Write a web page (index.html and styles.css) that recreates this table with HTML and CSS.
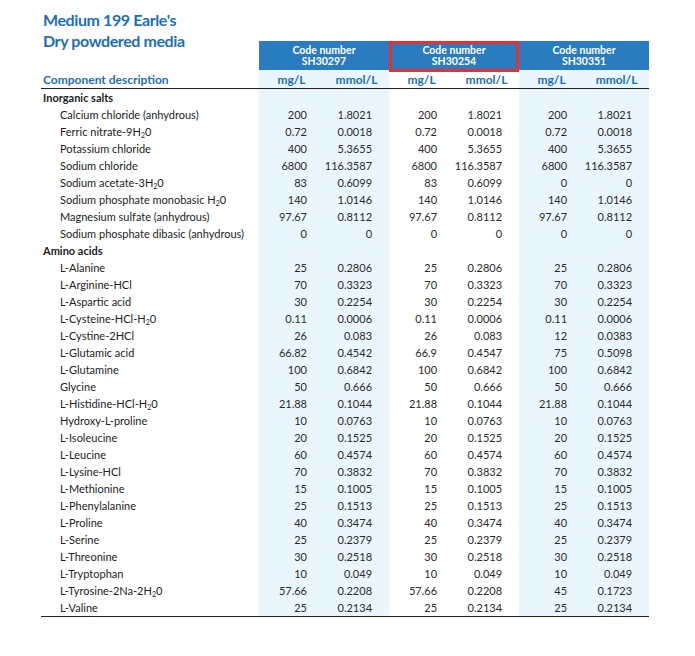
FILE: index.html
```html
<!DOCTYPE html>
<html>
<head>
<meta charset="utf-8">
<link rel="stylesheet" href="styles.css">
</head>
<body>
<div class="sheet">
<table class="media">
  <colgroup>
    <col class="c-desc"><col class="c-num"><col class="c-num"><col class="c-num"><col class="c-num"><col class="c-num"><col class="c-num">
  </colgroup>
  <thead>
    <tr class="r-code">
      <td class="title-cell"><h1 class="title">Medium 199 Earle's<br>Dry powdered media</h1></td>
      <th colspan="2" class="code-cell"><div class="codebox"><span>Code number</span><span>SH30297</span></div></th>
      <th colspan="2" class="code-cell"><div class="codebox sel"><span>Code number</span><span>SH30254</span></div></th>
      <th colspan="2" class="code-cell"><div class="codebox"><span>Code number</span><span>SH30351</span></div></th>
    </tr>
    <tr class="r-units">
      <th class="comp">Component description</th>
      <th class="unit tint">mg/L</th><th class="unit tint">mmol/L</th>
      <th class="unit">mg/L</th><th class="unit">mmol/L</th>
      <th class="unit tint">mg/L</th><th class="unit tint">mmol/L</th>
    </tr>
  </thead>
  <tbody>
    <tr class="grp"><td>Inorganic salts</td><td class="tint"></td><td class="tint"></td><td></td><td></td><td class="tint"></td><td class="tint"></td></tr>
    <tr><td class="item">Calcium chloride (anhydrous)</td><td class="n tint">200</td><td class="n tint">1.8021</td><td class="n">200</td><td class="n">1.8021</td><td class="n tint">200</td><td class="n tint">1.8021</td></tr>
    <tr><td class="item">Ferric nitrate-9H<sub>2</sub>0</td><td class="n tint">0.72</td><td class="n tint">0.0018</td><td class="n">0.72</td><td class="n">0.0018</td><td class="n tint">0.72</td><td class="n tint">0.0018</td></tr>
    <tr><td class="item">Potassium chloride</td><td class="n tint">400</td><td class="n tint">5.3655</td><td class="n">400</td><td class="n">5.3655</td><td class="n tint">400</td><td class="n tint">5.3655</td></tr>
    <tr><td class="item">Sodium chloride</td><td class="n tint">6800</td><td class="n tint">116.3587</td><td class="n">6800</td><td class="n">116.3587</td><td class="n tint">6800</td><td class="n tint">116.3587</td></tr>
    <tr><td class="item">Sodium acetate-3H<sub>2</sub>0</td><td class="n tint">83</td><td class="n tint">0.6099</td><td class="n">83</td><td class="n">0.6099</td><td class="n tint">0</td><td class="n tint">0</td></tr>
    <tr><td class="item">Sodium phosphate monobasic H<sub>2</sub>0</td><td class="n tint">140</td><td class="n tint">1.0146</td><td class="n">140</td><td class="n">1.0146</td><td class="n tint">140</td><td class="n tint">1.0146</td></tr>
    <tr><td class="item">Magnesium sulfate (anhydrous)</td><td class="n tint">97.67</td><td class="n tint">0.8112</td><td class="n">97.67</td><td class="n">0.8112</td><td class="n tint">97.67</td><td class="n tint">0.8112</td></tr>
    <tr><td class="item">Sodium phosphate dibasic (anhydrous)</td><td class="n tint">0</td><td class="n tint">0</td><td class="n">0</td><td class="n">0</td><td class="n tint">0</td><td class="n tint">0</td></tr>
    <tr class="grp"><td>Amino acids</td><td class="tint"></td><td class="tint"></td><td></td><td></td><td class="tint"></td><td class="tint"></td></tr>
    <tr><td class="item">L-Alanine</td><td class="n tint">25</td><td class="n tint">0.2806</td><td class="n">25</td><td class="n">0.2806</td><td class="n tint">25</td><td class="n tint">0.2806</td></tr>
    <tr><td class="item">L-Arginine-HCl</td><td class="n tint">70</td><td class="n tint">0.3323</td><td class="n">70</td><td class="n">0.3323</td><td class="n tint">70</td><td class="n tint">0.3323</td></tr>
    <tr><td class="item">L-Aspartic acid</td><td class="n tint">30</td><td class="n tint">0.2254</td><td class="n">30</td><td class="n">0.2254</td><td class="n tint">30</td><td class="n tint">0.2254</td></tr>
    <tr><td class="item">L-Cysteine-HCl-H<sub>2</sub>0</td><td class="n tint">0.11</td><td class="n tint">0.0006</td><td class="n">0.11</td><td class="n">0.0006</td><td class="n tint">0.11</td><td class="n tint">0.0006</td></tr>
    <tr><td class="item">L-Cystine-2HCl</td><td class="n tint">26</td><td class="n tint">0.083</td><td class="n">26</td><td class="n">0.083</td><td class="n tint">12</td><td class="n tint">0.0383</td></tr>
    <tr><td class="item">L-Glutamic acid</td><td class="n tint">66.82</td><td class="n tint">0.4542</td><td class="n">66.9</td><td class="n">0.4547</td><td class="n tint">75</td><td class="n tint">0.5098</td></tr>
    <tr><td class="item">L-Glutamine</td><td class="n tint">100</td><td class="n tint">0.6842</td><td class="n">100</td><td class="n">0.6842</td><td class="n tint">100</td><td class="n tint">0.6842</td></tr>
    <tr><td class="item">Glycine</td><td class="n tint">50</td><td class="n tint">0.666</td><td class="n">50</td><td class="n">0.666</td><td class="n tint">50</td><td class="n tint">0.666</td></tr>
    <tr><td class="item">L-Histidine-HCl-H<sub>2</sub>0</td><td class="n tint">21.88</td><td class="n tint">0.1044</td><td class="n">21.88</td><td class="n">0.1044</td><td class="n tint">21.88</td><td class="n tint">0.1044</td></tr>
    <tr><td class="item">Hydroxy-L-proline</td><td class="n tint">10</td><td class="n tint">0.0763</td><td class="n">10</td><td class="n">0.0763</td><td class="n tint">10</td><td class="n tint">0.0763</td></tr>
    <tr><td class="item">L-Isoleucine</td><td class="n tint">20</td><td class="n tint">0.1525</td><td class="n">20</td><td class="n">0.1525</td><td class="n tint">20</td><td class="n tint">0.1525</td></tr>
    <tr><td class="item">L-Leucine</td><td class="n tint">60</td><td class="n tint">0.4574</td><td class="n">60</td><td class="n">0.4574</td><td class="n tint">60</td><td class="n tint">0.4574</td></tr>
    <tr><td class="item">L-Lysine-HCl</td><td class="n tint">70</td><td class="n tint">0.3832</td><td class="n">70</td><td class="n">0.3832</td><td class="n tint">70</td><td class="n tint">0.3832</td></tr>
    <tr><td class="item">L-Methionine</td><td class="n tint">15</td><td class="n tint">0.1005</td><td class="n">15</td><td class="n">0.1005</td><td class="n tint">15</td><td class="n tint">0.1005</td></tr>
    <tr><td class="item">L-Phenylalanine</td><td class="n tint">25</td><td class="n tint">0.1513</td><td class="n">25</td><td class="n">0.1513</td><td class="n tint">25</td><td class="n tint">0.1513</td></tr>
    <tr><td class="item">L-Proline</td><td class="n tint">40</td><td class="n tint">0.3474</td><td class="n">40</td><td class="n">0.3474</td><td class="n tint">40</td><td class="n tint">0.3474</td></tr>
    <tr><td class="item">L-Serine</td><td class="n tint">25</td><td class="n tint">0.2379</td><td class="n">25</td><td class="n">0.2379</td><td class="n tint">25</td><td class="n tint">0.2379</td></tr>
    <tr><td class="item">L-Threonine</td><td class="n tint">30</td><td class="n tint">0.2518</td><td class="n">30</td><td class="n">0.2518</td><td class="n tint">30</td><td class="n tint">0.2518</td></tr>
    <tr><td class="item">L-Tryptophan</td><td class="n tint">10</td><td class="n tint">0.049</td><td class="n">10</td><td class="n">0.049</td><td class="n tint">10</td><td class="n tint">0.049</td></tr>
    <tr><td class="item">L-Tyrosine-2Na-2H<sub>2</sub>0</td><td class="n tint">57.66</td><td class="n tint">0.2208</td><td class="n">57.66</td><td class="n">0.2208</td><td class="n tint">45</td><td class="n tint">0.1723</td></tr>
    <tr class="last"><td class="item">L-Valine</td><td class="n tint">25</td><td class="n tint">0.2134</td><td class="n">25</td><td class="n">0.2134</td><td class="n tint">25</td><td class="n tint">0.2134</td></tr>
  </tbody>
</table>
</div>
</body>
</html>
```

FILE: styles.css
```css
html, body {
  margin: 0;
  padding: 0;
  background: #ffffff;
}

.sheet {
  padding: 9px 0 0 41px;
  font-family: "Lato", "Open Sans", sans-serif;
  color: #222222;
}

.media {
  table-layout: fixed;
  border-collapse: collapse;
  border-spacing: 0;
  width: 608px;
}

.c-desc { width: 218px; }
.c-num { width: 65px; }

.media td, .media th {
  padding: 0;
}

.r-code { height: 61px; }

.title-cell {
  vertical-align: top;
}

.title {
  margin: 0;
  padding-left: 2px;
  font-size: 16px;
  line-height: 21px;
  font-weight: 700;
  letter-spacing: -0.4px;
  color: #1c6fb6;
  white-space: nowrap;
}

.code-cell {
  vertical-align: bottom;
}

.codebox {
  position: relative;
  height: 29px;
  display: flex;
  flex-direction: column;
  justify-content: center;
  align-items: center;
  background: #2a7cc0;
  color: #ffffff;
  font-size: 10.5px;
  line-height: 12px;
  font-weight: 700;
}

.codebox span {
  display: block;
  height: 11px;
  line-height: 11px;
}

.codebox.sel::after {
  content: "";
  position: absolute;
  left: 0;
  right: 0;
  top: 0;
  bottom: -2px;
  border: 3px solid #e8302e;
}

.r-units { height: 18px; }

.r-units th {
  border-bottom: 1px solid #222222;
  vertical-align: bottom;
  padding-bottom: 1px;
}

.comp {
  text-align: left;
  padding-left: 2px !important;
  font-size: 12px;
  font-weight: 700;
  color: #1c6fb6;
  white-space: nowrap;
}

.unit {
  text-align: center;
  font-size: 12px;
  font-weight: 700;
  color: #1c6fb6;
}

.tint {
  background: #e9f6fd;
}

.media tbody tr {
  height: 17px;
}

.media tbody td {
  font-size: 11px;
  line-height: 17px;
  white-space: nowrap;
  vertical-align: middle;
}

.grp td:first-child {
  padding-left: 2px;
  font-weight: 700;
  color: #222222;
}

.item {
  padding-left: 19px !important;
}

.n {
  text-align: right;
  padding-right: 17px !important;
  color: #2a2a2a;
}

.last td {
  border-bottom: 1.5px solid #222222;
}

sub {
  font-size: 7px;
  line-height: 0;
  vertical-align: -2px;
}
```
